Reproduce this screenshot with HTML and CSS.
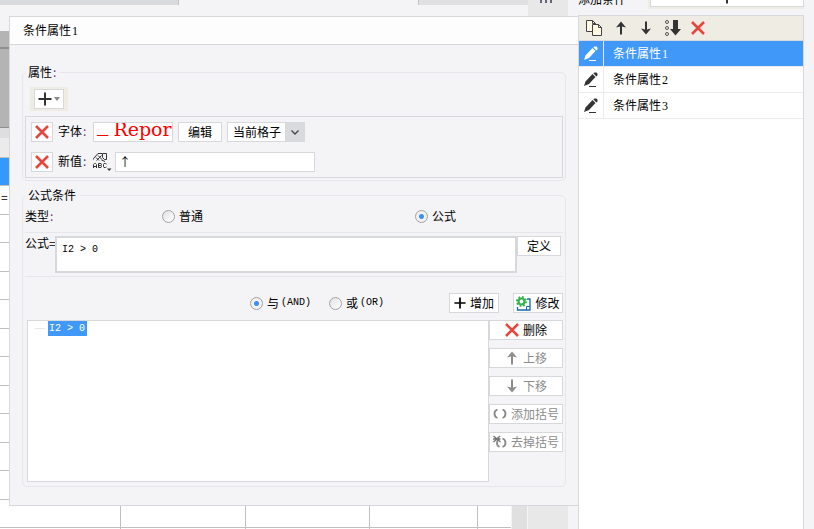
FILE: index.html
```html
<!DOCTYPE html>
<html lang="zh-CN">
  <head>
    <meta charset="UTF-8" />
    <meta name="viewport" content="width=device-width, initial-scale=1.0" />
    <title>条件属性</title>
    <link rel="stylesheet" href="styles.css">
  </head>
  <body>
    <!-- Shared icons -->
    <svg class="icon-defs" width="0" height="0">
      <symbol id="icon-delete" viewBox="0 0 14 14">
        <path d="M1 1 L13 13 M13 1 L1 13" stroke="#e8453c" stroke-width="2.6" fill="none" />
      </symbol>
      <symbol id="icon-up" viewBox="0 0 14 14">
        <path d="M7 0.5 L12 6.5 L8 5.5 V13.5 H6 V5.5 L2 6.5 Z" fill="currentColor" />
      </symbol>
      <symbol id="icon-down" viewBox="0 0 14 14">
        <path d="M7 13.5 L12 7.5 L8 8.5 V0.5 H6 V8.5 L2 7.5 Z" fill="currentColor" />
      </symbol>
      <symbol id="icon-plus" viewBox="0 0 14 14">
        <path d="M7 0.5 V13.5 M0.5 7 H13.5" stroke="currentColor" stroke-width="2" />
      </symbol>
      <symbol id="icon-edit" viewBox="0 0 16 16">
        <path d="M1 14 L2.5 9.5 L9.5 2 L12.5 5 L6 12 Z" fill="currentColor" />
        <path d="M10.3 1.3 L11.5 0.6 H13.5 L14.5 1.8 V3.5 L13.4 4.4 Z" fill="currentColor" />
        <path d="M6 14.5 H13" stroke="currentColor" />
      </symbol>
    </svg>

    <div class="app">
      <!-- Report sheet behind the dialog -->
      <main class="sheet">
        <div class="tabs">
          <div class="tab tab-active"></div>
          <div class="tab"></div>
        </div>
        <div class="ruler"></div>
        <div class="ruler-gap"></div>
        <div class="column-head"></div>
        <div class="cells">
          <div class="cell-selected"></div>
          <div class="cell-text">=</div>
          <div class="columns">
            <span class="column"></span>
            <span class="column"></span>
            <span class="column"></span>
            <span class="column"></span>
          </div>
        </div>
      </main>
      <div class="scrollbar"></div>
      <div class="side-strip">
        <i class="dot"></i><i class="dot"></i><i class="dot"></i>
      </div>

      <!-- Condition list -->
      <aside class="side">
        <div class="side-head">
          <span class="side-label">添加条件</span>
          <button class="add-condition" aria-label="添加条件">
            <svg width="14" height="14"><use href="#icon-plus" /></svg>
          </button>
        </div>
        <div class="condition-panel">
          <div class="condition-tools">
            <button class="tool" aria-label="复制">
              <svg width="18" height="18" viewBox="0 0 18 18">
                <path d="M1.5 1.5 H7.5 L10.5 4.5 V12.5 H1.5 Z" fill="#fff8e4" stroke="#444" />
                <path d="M7.5 1.5 V4.5 H10.5" fill="none" stroke="#444" />
                <path d="M7.5 5.5 H13.5 L16.5 8.5 V16.5 H7.5 Z" fill="#fff8e4" stroke="#444" />
                <path d="M13.5 5.5 V8.5 H16.5" fill="none" stroke="#444" />
              </svg>
            </button>
            <button class="tool" aria-label="上移">
              <svg width="14" height="14"><use href="#icon-up" /></svg>
            </button>
            <button class="tool" aria-label="下移">
              <svg width="14" height="14"><use href="#icon-down" /></svg>
            </button>
            <button class="tool" aria-label="排序">
              <svg width="18" height="18" viewBox="0 0 18 18">
                <g fill="none" stroke="#555">
                  <circle cx="3" cy="3" r="1.5" />
                  <circle cx="3" cy="9" r="1.5" />
                  <circle cx="3" cy="15" r="1.5" />
                </g>
                <path d="M9 1 H14 V10 H17 L11.5 16.5 L6 10 H9 Z" fill="#333" />
              </svg>
            </button>
            <button class="tool" aria-label="删除">
              <svg width="14" height="14"><use href="#icon-delete" /></svg>
            </button>
          </div>
          <ul class="conditions">
            <li class="condition active">
              <span class="condition-icon"><svg width="16" height="16"><use href="#icon-edit" /></svg></span>
              <span class="condition-name">条件属性<span class="num">1</span></span>
            </li>
            <li class="condition">
              <span class="condition-icon"><svg width="16" height="16"><use href="#icon-edit" /></svg></span>
              <span class="condition-name">条件属性<span class="num">2</span></span>
            </li>
            <li class="condition">
              <span class="condition-icon"><svg width="16" height="16"><use href="#icon-edit" /></svg></span>
              <span class="condition-name">条件属性<span class="num">3</span></span>
            </li>
          </ul>
        </div>
      </aside>
    </div>

    <!-- Condition dialog -->
    <div class="dialog" role="dialog" aria-labelledby="dialog-title">
      <h1 class="dialog-title" id="dialog-title">条件属性<span class="num">1</span></h1>
      <div class="dialog-body">
        <fieldset class="group">
          <legend>属性<span class="colon">:</span></legend>
          <div class="add-bar">
            <button class="btn btn-add" aria-label="添加属性">
              <svg width="14" height="14"><use href="#icon-plus" /></svg>
              <svg width="6" height="4" viewBox="0 0 6 4"><path d="M0 0 H6 L3 4 Z" fill="#888" /></svg>
            </button>
          </div>
          <div class="properties">
            <div class="property">
              <button class="btn btn-icon" aria-label="删除字体">
                <svg width="14" height="14"><use href="#icon-delete" /></svg>
              </button>
              <span class="property-label">字体<span class="colon">:</span></span>
              <div class="font-preview"><span class="font-mark">_</span><span>Repor</span></div>
              <button class="btn btn-edit">编辑</button>
              <div class="select-wrap">
                <select class="select" aria-label="作用范围">
                  <option>当前格子</option>
                </select>
                <span class="select-arrow">
                  <svg width="8" height="5" viewBox="0 0 8 5"><path d="M0.5 0.5 L4 4 L7.5 0.5" fill="none" stroke="#444" stroke-width="1.3" /></svg>
                </span>
              </div>
            </div>
            <div class="property">
              <button class="btn btn-icon" aria-label="删除新值">
                <svg width="14" height="14"><use href="#icon-delete" /></svg>
              </button>
              <label class="property-label" for="new-value">新值<span class="colon">:</span></label>
              <button class="value-type" aria-label="值类型">
                <svg width="20" height="20" viewBox="0 0 20 20">
                  <g fill="none" stroke="#333">
                    <path d="M0.5 7.5 V6.5 L5 1.5 H9 M3 5.5 L6 8.5 M5 3.5 L9 7.5 M3.5 8.5 L8.5 3.5 M8.5 8 L12 9.5" />
                    <path d="M9.5 1.5 H13.5 V7.5 H11.5 L9.5 5.5 Z" />
                    <path d="M0.5 16 V12.5 L1.5 11.5 H2.5 L3.5 12.5 V16 M0.5 14.5 H3.5" />
                    <path d="M5.5 11.5 H8 L8.5 12.5 L8 13.5 H5.5 M8 13.5 L8.5 14.5 L8 15.5 H5.5 V11.5" />
                    <path d="M13.5 12 L12.5 11.5 H11 L10.5 12.5 V14.5 L11 15.5 H12.5 L13.5 15" />
                  </g>
                  <path d="M14 16.5 H18.5 L16.2 19 Z" fill="#333" />
                </svg>
              </button>
              <input class="value-input" id="new-value" type="text" value="↑" />
            </div>
          </div>
        </fieldset>

        <fieldset class="group">
          <legend>公式条件</legend>
          <div class="type-row">
            <span>类型<span class="colon">:</span></span>
            <label class="radio"><input type="radio" name="type" />普通</label>
            <label class="radio"><input type="radio" name="type" checked />公式</label>
          </div>
          <div class="formula-row">
            <label class="formula-label" for="formula">公式=</label>
            <textarea class="formula" id="formula">I2 &gt; 0</textarea>
            <button class="btn btn-define">定义</button>
          </div>
          <div class="join-row">
            <div class="join-options">
              <label class="radio"><input type="radio" name="join" checked />与<span class="code">(AND)</span></label>
              <label class="radio"><input type="radio" name="join" />或<span class="code">(OR)</span></label>
            </div>
            <button class="btn btn-join">
              <svg width="12" height="12"><use href="#icon-plus" /></svg>增加
            </button>
            <button class="btn btn-join">
              <svg width="15" height="15" viewBox="0 0 15 15">
                <path d="M1.5 11 V14 H14 V3 H11" fill="none" stroke="#1768b0" stroke-width="1.3" />
                <path d="M10.5 14 V10.5 H14" fill="none" stroke="#1768b0" />
                <circle cx="5.5" cy="5.5" r="4.6" fill="none" stroke="#34b34a" stroke-width="1.8" stroke-dasharray="1.8 1.8" />
                <circle cx="5.5" cy="5.5" r="3" fill="#fff" stroke="#34b34a" stroke-width="2.2" />
              </svg>修改
            </button>
          </div>
          <div class="list-row">
            <div class="tree">
              <div class="tree-item"><span class="tree-text code">I2 &gt; 0</span></div>
            </div>
            <div class="actions">
              <button class="btn">
                <svg width="14" height="14"><use href="#icon-delete" /></svg>删除
              </button>
              <button class="btn" disabled>
                <svg width="14" height="14"><use href="#icon-up" /></svg>上移
              </button>
              <button class="btn" disabled>
                <svg width="14" height="14"><use href="#icon-down" /></svg>下移
              </button>
              <button class="btn" disabled>
                <svg width="14" height="12" viewBox="0 0 14 12">
                  <path d="M4.5 1.5 Q1.5 2.5 1.5 5.5 Q1.5 9 4.5 10 M9.5 1.5 Q12.5 2.5 12.5 5.5 Q12.5 9 9.5 10" fill="none" stroke="#888" stroke-width="1.8" />
                </svg>添加括号
              </button>
              <button class="btn" disabled>
                <svg width="14" height="14" viewBox="0 0 14 14">
                  <path d="M6.5 4 Q4 5 4 8 Q4 11 6.5 12 M9.5 3.5 Q12.5 4.5 12.5 8 Q12.5 11 9.5 12" fill="none" stroke="#888" stroke-width="1.8" />
                  <path d="M0.5 1 L7.5 7 M7 1 L0.5 7 M0 4 H7.5" stroke="#777" stroke-width="1.4" />
                </svg>去掉括号
              </button>
            </div>
          </div>
        </fieldset>
      </div>
    </div>
  </body>
</html>
```

FILE: styles.css
```css
* {
  box-sizing: border-box;
}
body {
  margin: 0;
  background: #f4f4f7;
  color: #000;
  font-family: "Noto Sans CJK SC", sans-serif;
  font-size: 12px;
  line-height: 16px;
  overflow: hidden;
}
button,
input,
select,
textarea {
  margin: 0;
  font: inherit;
  color: inherit;
}
svg {
  display: block;
  flex: none;
}
.icon-defs {
  position: absolute;
}
.num {
  margin-left: 1px;
  font-family: "Liberation Serif", serif;
  line-height: 1;
}
.code {
  font-family: "Liberation Mono", monospace;
  font-size: 10px;
}
.colon {
  margin-left: 1px;
  color: #7a2f7a;
}

/* Sheet */
.app {
  display: flex;
  height: 100vh;
}
.sheet {
  flex: 1;
  display: flex;
  flex-direction: column;
}
.tabs {
  display: flex;
  justify-content: space-between;
  height: 31px;
}
.tab {
  width: 110px;
  height: 5px;
  margin-right: -17px;
  background: #e0e0e2;
  border-left: 1px solid #c2c2c5;
}
.tab-active {
  width: 179px;
  background: #d9dade;
  border-left: 0;
  border-right: 1px solid #c2c2c5;
}
.ruler {
  height: 97px;
  background: linear-gradient(#b4b4b4 16px, #8f8f8f 16px, #8f8f8f 18px, #b4b4b4 18px);
  border-bottom: 1px solid #8f8f8f;
}
.ruler-gap {
  height: 10px;
  background: #dedee1;
}
.column-head {
  height: 20px;
  background: #ebebeb;
  border-bottom: 1px solid #c0c0c0;
}
.cells {
  flex: 1;
  display: flex;
  flex-direction: column;
  /* two rows per repeat: 28px and 29px */
  background: repeating-linear-gradient(
    #fff 0 27px,
    #c0c0c0 27px 28px,
    #fff 28px 56px,
    #c0c0c0 56px 57px
  );
}
.cell-selected {
  width: 10px;
  height: 27px;
  background: #3399ff;
}
.cell-text {
  height: 28px;
  padding: 4px 1px;
}
.columns {
  flex: 1;
  display: flex;
}
.column {
  flex: 0 1 125px;
  border-right: 1px solid #c0c0c0;
}
.column:first-child {
  flex-basis: 121px;
}
.column:nth-child(3) {
  flex-basis: 124px;
}
.column:last-child {
  flex-basis: 108px;
}
.scrollbar {
  width: 17px;
  margin-top: 31px;
  background: #e0e0e0;
  border-left: 1px solid #f4f4f7;
  border-right: 1px solid #f4f4f7;
}
.side-strip {
  display: flex;
  gap: 3px;
  width: 40px;
  padding-left: 12px;
  background: #e8e8e8;
}
.dot {
  width: 2px;
  height: 3px;
  background: #667;
}

/* Condition list */
.side {
  display: flex;
  flex-direction: column;
  width: 246px;
  padding: 0 10px;
}
.side-head {
  display: flex;
  justify-content: space-between;
  align-items: flex-end;
  height: 15px;
  padding-bottom: 8px;
  overflow: hidden;
}
.add-condition {
  display: flex;
  align-items: center;
  justify-content: center;
  width: 154px;
  height: 20px;
  padding: 0;
  background: #fff;
  border: 1px solid #d7d8dc;
  outline: 2px solid #efece4;
  color: #333;
}
.condition-panel {
  flex: 1;
  background: #fff;
  border: 1px solid #d7d8dc;
  border-bottom: 0;
}
.condition-tools {
  display: flex;
  align-items: center;
  gap: 11px;
  height: 25px;
  padding-left: 6px;
  background: #efece4;
  border-bottom: 1px solid #d7d8dc;
}
.tool {
  padding: 0;
  background: none;
  border: 0;
  color: #333;
}
.tool:last-child {
  margin-left: -2px;
}
.conditions {
  margin: 0;
  padding: 0;
  list-style: none;
}
.condition {
  display: flex;
  height: 26px;
  line-height: 23px;
  border-bottom: 1px solid #ebebee;
}
.condition-icon {
  display: flex;
  align-items: center;
  width: 25px;
  padding-left: 4px;
  border-right: 1px solid #ebebee;
  color: #333;
}
.condition-name {
  padding-left: 9px;
}
.condition.active {
  background: #4099f9;
  color: #fff;
}
.condition.active .condition-icon {
  color: #fff;
}

/* Dialog */
.dialog {
  position: absolute;
  top: 16px;
  left: 9px;
  right: 235px;
  background: #f4f4f7;
  border: 1px solid #d7d8dc;
}
.dialog-title {
  margin: 0;
  padding: 5px 13px 6px;
  background: #fdfdfd;
  border-bottom: 1px solid #d7d8dc;
  font-size: 12px;
  font-weight: normal;
}
.dialog-body {
  padding: 19px 12px 18px;
}
.group {
  min-width: 0;
  margin: 0 0 6px;
  padding: 0 2px 2px;
  border: 1px solid #e6e7ea;
  border-radius: 5px;
}
.group:last-child {
  margin-bottom: 0;
  padding-bottom: 4px;
}
.group legend {
  padding: 0 4px 0 3px;
}
.btn {
  display: flex;
  align-items: center;
  justify-content: center;
  gap: 4px;
  height: 20px;
  padding: 0;
  background: #fff;
  border: 1px solid #d7d8dc;
  line-height: 14px;
  white-space: nowrap;
}
.btn:disabled {
  color: #8c8c8c;
}
.add-bar {
  width: 38px;
  margin: 7px 0 5px 5px;
  padding: 2px 4px;
  background: #efece4;
}
.btn-add {
  width: 30px;
  gap: 2px;
  color: #333;
}
.properties {
  display: flex;
  flex-direction: column;
  gap: 10px;
  padding: 5px;
  border: 1px solid #d7d8dc;
}
.property {
  display: flex;
  align-items: center;
  height: 20px;
}
.btn-icon {
  width: 22px;
}
.property-label {
  width: 40px;
  padding: 0 0 2px 5px;
}
.font-preview {
  display: flex;
  gap: 5px;
  width: 80px;
  height: 20px;
  padding-left: 3px;
  background: #fff;
  border: 1px solid #d7d8dc;
  color: #f00;
  font-family: "DejaVu Serif", serif;
  font-size: 19px;
  line-height: 12px;
  overflow: hidden;
}
.font-mark {
  font-family: "Liberation Mono", monospace;
}
.btn-edit {
  width: 44px;
  margin: 0 5px;
}
.select-wrap {
  display: flex;
  position: relative;
}
.select {
  width: 78px;
  height: 20px;
  padding: 0 20px 1px 5px;
  appearance: none;
  background: #fff;
  border: 1px solid #d7d8dc;
  border-radius: 0;
}
.select-arrow {
  position: absolute;
  top: 0;
  right: 0;
  display: flex;
  align-items: center;
  justify-content: center;
  width: 20px;
  height: 20px;
  background: #d9dade;
  pointer-events: none;
}
.value-type {
  padding: 0;
  background: none;
  border: 0;
}
.value-input {
  width: 200px;
  height: 20px;
  margin-left: 2px;
  padding: 0 3px 2px;
  background: #fff;
  border: 1px solid #d7d8dc;
}

/* Formula */
.type-row {
  display: grid;
  grid-template-columns: 137px 253px 1fr;
  align-items: center;
  height: 30px;
  padding-bottom: 3px;
  border-bottom: 1px solid #e6e7ea;
}
.radio {
  display: flex;
  align-items: center;
  gap: 4px;
}
.radio .code {
  margin-left: -2px;
}
.radio input {
  flex: none;
  width: 13px;
  height: 13px;
  appearance: none;
  border: 1px solid #a3a3a6;
  border-radius: 50%;
  background: linear-gradient(135deg, #e2e2e4, #fff);
}
.radio input:checked {
  background: radial-gradient(circle, #3f8ff0 2px, #f1f1f3 3px);
}
.formula-row {
  display: flex;
  align-items: flex-start;
  padding: 3px 2px 3px 0;
  border-bottom: 1px solid #e6e7ea;
}
.formula-label {
  width: 30px;
  line-height: 14px;
  white-space: nowrap;
}
.formula {
  flex: 1;
  height: 37px;
  padding: 4px 5px;
  border: 2px solid #d7d8dc;
  background: #fff;
  font-family: "Liberation Mono", monospace;
  font-size: 10px;
  resize: none;
  overflow: hidden;
}
.btn-define {
  width: 44px;
}
.join-row {
  display: flex;
  gap: 14px;
  padding: 16px 0 7px;
}
.join-options {
  flex: 1;
  display: flex;
  justify-content: flex-end;
  gap: 18px;
  padding-right: 51px;
}
.btn-join {
  width: 50px;
}
.list-row {
  display: flex;
  padding-left: 2px;
}
.tree {
  flex: 1;
  min-height: 162px;
  background: #fff;
  border: 1px solid #d7d8dc;
}
.tree-item {
  display: flex;
  align-items: center;
  padding-left: 7px;
}
.tree-item::before {
  content: "";
  width: 10px;
  margin-right: 3px;
  border-top: 1px solid #e6e7ea;
}
.tree-text {
  padding: 0 2px 0 1px;
  background: #4099f9;
  color: #fff;
  line-height: 15px;
}
.actions {
  display: flex;
  flex-direction: column;
  gap: 8px;
  width: 74px;
}
```
